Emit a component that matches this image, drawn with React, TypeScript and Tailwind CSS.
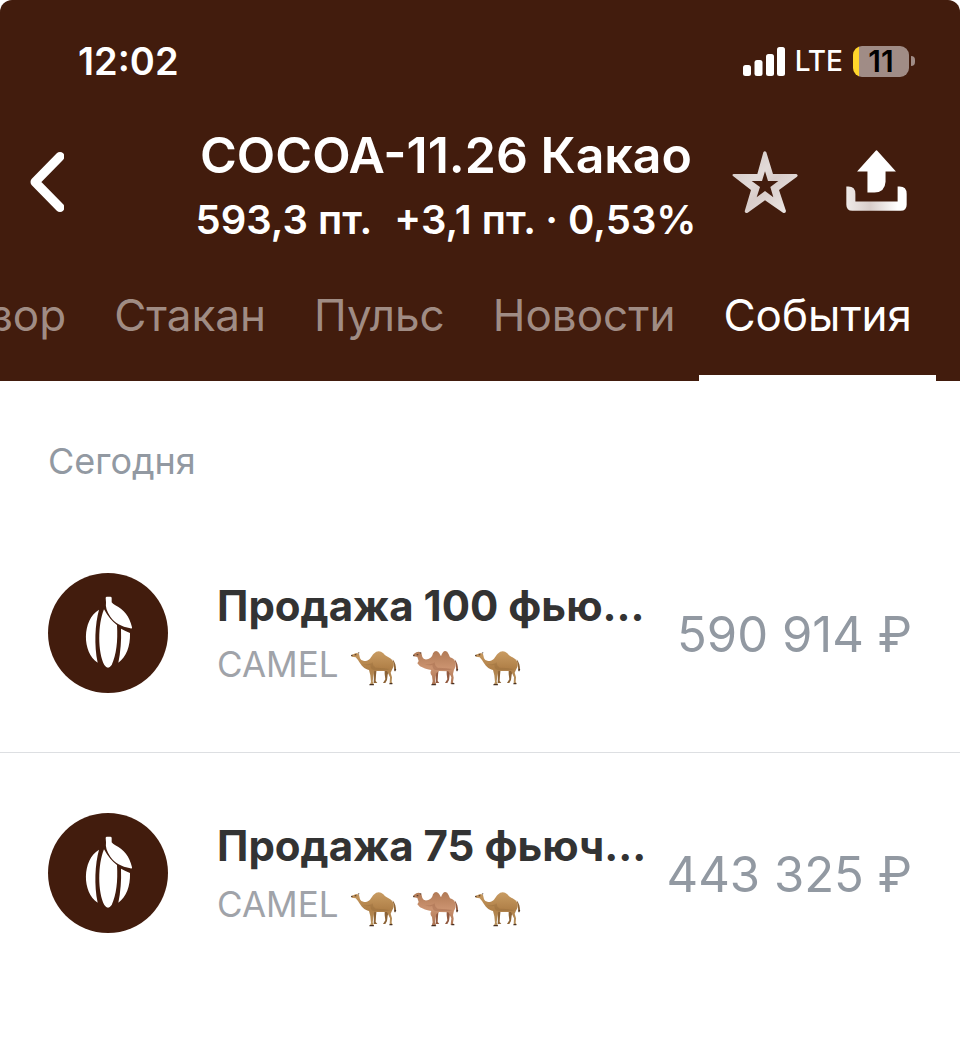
import { useState } from "react";

interface Deal {
  id: number;
  title: string;
  author: string;
  amount: string;
}

const TABS = ["Обзор", "Стакан", "Пульс", "Новости", "События"];

const DEALS: Deal[] = [
  { id: 1, title: "Продажа 100 фью...", author: "CAMEL", amount: "590 914 ₽" },
  { id: 2, title: "Продажа 75 фьюч...", author: "CAMEL", amount: "443 325 ₽" },
];

function SignalIcon() {
  return (
    <svg className="w-[42px] h-[29px] fill-white" viewBox="0 0 42 29" aria-hidden="true">
      <rect x="0" y="18" width="8" height="11" rx="2.5" />
      <rect x="11.5" y="13" width="8" height="16" rx="2.5" />
      <rect x="23" y="7" width="8" height="22" rx="2.5" />
      <rect x="34" y="0" width="8" height="29" rx="2.5" />
    </svg>
  );
}

function Battery() {
  return (
    <div className="flex items-center gap-[2px]">
      <div className="flex h-[31px] w-[56px] items-center justify-center rounded-[9px] bg-linear-to-r from-[#ffd52b] from-[6px] to-[#a08c86] to-[6px] text-[30px] leading-none font-semibold text-black">
        11
      </div>
      <div className="h-[10px] w-[4px] rounded-r-full bg-[#a08c86]" />
    </div>
  );
}

function BackIcon() {
  return (
    <svg className="w-[34px] h-[60px]" viewBox="0 0 34 60" fill="none" aria-hidden="true">
      <path d="M30 4.5 5 30 30 55.5" stroke="white" strokeWidth="9" strokeLinecap="round" strokeLinejoin="round" />
    </svg>
  );
}

function StarIcon() {
  return (
    <svg className="w-[66px] h-[64px]" viewBox="36 60 198 192" aria-hidden="true">
      <defs>
        <linearGradient id="star" x1="0" y1="0" x2="1" y2="1">
          <stop offset="0" stopColor="#cfc4c0" />
          <stop offset="0.4" stopColor="#e2dad8" />
          <stop offset="0.55" stopColor="#d8cdca" />
          <stop offset="1" stopColor="#f0ecea" />
        </linearGradient>
      </defs>
      <path
        fill="url(#star)"
        fillRule="evenodd"
        d="M130 67Q134 60 139 67L159 132 229 132Q236 135 231 140L177 180 198 243Q197 251 189 248L135 211 83 248Q75 251 74 244L93 180 40 139Q34 133 42 132L112 132ZM135 124 126 153 95 153 120 171 110 202 135 183 160 202 151 171 175 153 144 153Z"
      />
    </svg>
  );
}

function ShareIcon() {
  return (
    <svg className="w-[61px] h-[61px]" viewBox="377 59 182 182" aria-hidden="true">
      <defs>
        <linearGradient id="tray" x1="0" y1="0" x2="1" y2="0">
          <stop offset="0" stopColor="#efeae8" />
          <stop offset="0.4" stopColor="#d8cdca" />
          <stop offset="0.85" stopColor="#ffffff" />
        </linearGradient>
      </defs>
      <path fill="white" d="M465 62Q468 58 471 62L526 123H495V154Q493 186 462 186H441V123H410Z" />
      <path
        fill="url(#tray)"
        d="M378 168H384Q405 168 405 190V213H531V168H537Q558 168 558 190V222Q558 240 540 240H396Q378 240 378 222Z"
      />
    </svg>
  );
}

function CocoaLogo() {
  return (
    <svg className="w-[120px] h-[120px] shrink-0" viewBox="24 24 360 360" aria-hidden="true">
      <circle cx="204" cy="204" r="180" fill="#421c0d" />
      <g fill="white">
        <path d="M197 99Q197 95 201 95H211Q215 95 215 99V112Q218 116 226 121C252 134 268 154 276 187Q277 192 271 190C244 184 224 174 211 155C200 139 196 126 198 112Z" />
        <path d="M192 133C204 154 216 170 231 180C234 229 229 270 215 300Q204 316 193 300C173 263 173 178 192 133Z" />
        <path d="M177 134C165 177 162 240 173 293C126 263 125 165 177 134Z" />
        <path d="M243 191Q256 198 270 204C271 245 259 275 235 293Q245 244 243 191Z" />
      </g>
    </svg>
  );
}

function Camel({ humps }: { humps: 1 | 2 }) {
  const coat = humps === 1 ? "url(#coat1)" : "url(#coat2)";
  const dark = humps === 1 ? "#8c6336" : "#925a40";
  return (
    <svg className="w-[47px] h-[37px]" viewBox="30 31 141 111" role="img" aria-label={humps === 1 ? "🐪" : "🐫"}>
      <defs>
        <linearGradient id="coat1" x1="0" y1="0" x2="0" y2="1">
          <stop offset="0" stopColor="#c99c63" />
          <stop offset="0.5" stopColor="#b08048" />
          <stop offset="1" stopColor="#b8935f" />
        </linearGradient>
        <linearGradient id="coat2" x1="0" y1="0" x2="0" y2="1">
          <stop offset="0" stopColor="#b17a55" />
          <stop offset="0.5" stopColor="#cb9370" />
          <stop offset="1" stopColor="#aa7150" />
        </linearGradient>
      </defs>
      {/* far legs and tail */}
      <path
        fill={dark}
        d="M100 90H110L108 110 107 127 112 133H101L102 112ZM134 90 148 88 143 108 141 124 136 133H129L136 122 134 106ZM158 62C166 72 168 82 168 94L163 98 162 84Z"
      />
      {humps === 1 ? (
        <path
          fill={coat}
          d="M34 49 43 45Q50 41 57 46L60 59Q64 69 76 67C91 65 93 53 101 45Q116 31 130 44C138 56 151 55 158 66Q165 80 157 91L152 102 156 116 155 129 158 135H149L150 116 141 97 112 97 103 96 101 110 98 128 102 139H89L93 130 91 110 87 94C73 91 64 81 54 64L47 56 36 54Z"
        />
      ) : (
        <path
          fill={coat}
          d="M34 47 43 41Q51 36 58 43L61 55Q65 65 79 61C88 58 91 53 93 44Q101 31 111 42L117 53C119 46 122 42 126 38Q135 34 140 47L144 56Q157 59 160 71Q163 85 156 93L153 106 155 117 153 130 156 136H146L148 116 139 98 111 97 103 104 99 128 103 138H89L92 128 90 112Q82 103 88 94C76 92 71 90 64 87L54 83 46 74 50 67 46 55 36 53Z"
        />
      )}
      <path fill={dark} opacity="0.3" d="M69 77Q82 82 91 78Q92 92 101 94H142L151 91Q137 88 107 87Q98 82 98 71Q90 79 69 77Z" />
      <path fill="#473124" d="M44 47H49V50H44ZM33 49 38 48 37 53H34ZM53 42 58 41 57 45ZM89 136 101 136 102 140H88ZM149 133H157V137H148ZM163 90 169 91 165 99Z" />
    </svg>
  );
}

function DealRow({ deal }: { deal: Deal }) {
  return (
    <li className="flex h-60 items-center border-b border-[#dddfe2] px-12 last:border-b-0">
      <CocoaLogo />
      <div className="ml-[49px] min-w-0 flex-1 pt-[6px]">
        <h2 className="text-[42px] leading-[56px] font-bold whitespace-nowrap text-[#333333]">{deal.title}</h2>
        <div className="flex items-center gap-3 text-[35px] leading-[60px] text-[#a0a3a9]">
          <span>{deal.author}</span>
          <span className="flex gap-[15px] pt-2">
            <Camel humps={1} />
            <Camel humps={2} />
            <Camel humps={1} />
          </span>
        </div>
      </div>
      <p className="pt-1 text-[49px] leading-[60px] whitespace-nowrap text-[#9299a2]">{deal.amount}</p>
    </li>
  );
}

export default function App() {
  const [activeTab, setActiveTab] = useState("События");

  return (
    <div className="min-h-screen overflow-hidden bg-white font-['Inter','Liberation_Sans',sans-serif]">
      <header className="rounded-t-xl bg-[#421c0d] text-white">
        <div className="flex h-[122px] items-center justify-between pr-[45px] pl-[78px]">
          <time className="text-[38px] font-semibold">12:02</time>
          <div className="flex items-center gap-[10px]">
            <SignalIcon />
            <span className="text-[28px] font-medium">LTE</span>
            <Battery />
          </div>
        </div>

        <div className="flex h-[120px] items-center pr-[53px] pl-[30px]">
          <button className="w-[130px] shrink-0" aria-label="Назад">
            <BackIcon />
          </button>
          <div className="flex-1 pt-3 text-center whitespace-nowrap">
            <h1 className="text-[50px] leading-[64px] font-semibold">COCOA-11.26 Какао</h1>
            <p className="flex justify-center gap-[22px] text-[40px] leading-[66px] font-semibold">
              <span>593,3 пт.</span>
              <span>+3,1 пт. · 0,53%</span>
            </p>
          </div>
          <div className="flex shrink-0 items-start gap-12">
            <button aria-label="В избранное">
              <StarIcon />
            </button>
            <button aria-label="Поделиться">
              <ShareIcon />
            </button>
          </div>
        </div>

        <nav className="flex justify-end overflow-hidden pr-6">
          {TABS.map((tab) => (
            <button
              key={tab}
              onClick={() => setActiveTab(tab)}
              className={`h-[139px] shrink-0 border-b-6 px-6 pt-3 text-[44px] ${
                tab === activeTab ? "border-white text-white" : "border-transparent text-[#a08c84]"
              }`}
            >
              {tab}
            </button>
          ))}
        </nav>
      </header>

      <main>
        <h3 className="px-12 pt-14 pb-7 text-[36px] leading-[48px] text-[#9299a2]">Сегодня</h3>
        <ul>
          {DEALS.map((deal) => (
            <DealRow key={deal.id} deal={deal} />
          ))}
        </ul>
      </main>
    </div>
  );
}
